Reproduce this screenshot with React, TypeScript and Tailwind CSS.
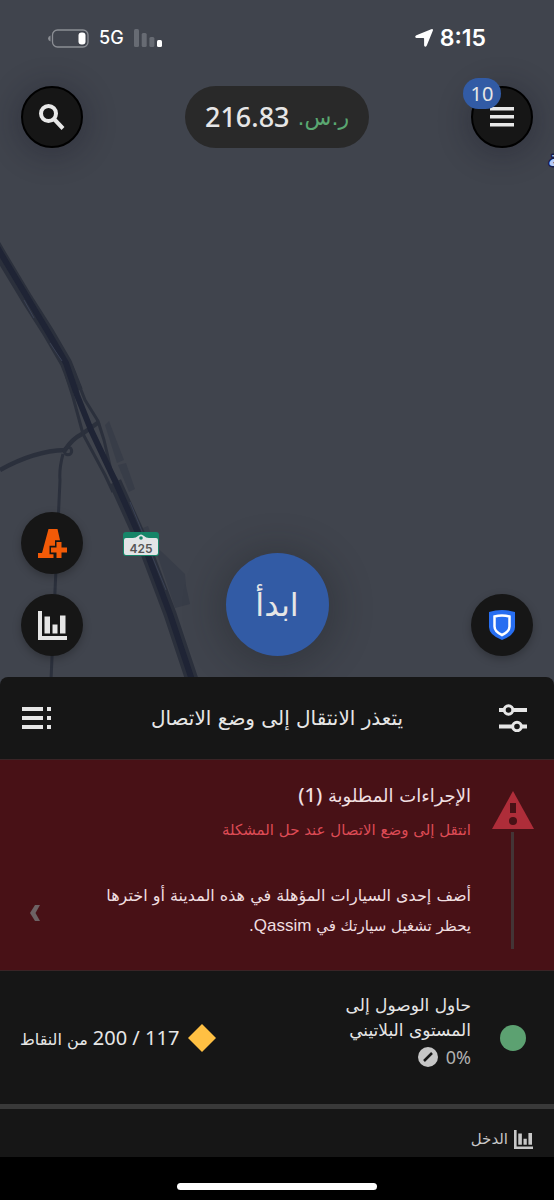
import type { ReactNode } from "react";

const round =
  "flex size-[62px] shrink-0 items-center justify-center rounded-full bg-[#161616]";

function BarChart({ className }: { className: string }) {
  return (
    <svg viewBox="0 0 29 29" className={className} fill="currentColor" aria-hidden="true">
      <path d="M0 0h4v25h25v4H0zM6.500 5.500h5.500v17H6.500zM14.500 13.500h5v9h-5zM22 4.500h5.500v18H22z" />
    </svg>
  );
}

function SearchIcon() {
  return (
    <svg viewBox="0 0 26 26" className="size-[26px]" fill="none" stroke="#e8e8e8" aria-hidden="true">
      <circle cx="9.500" cy="9.500" r="7.500" strokeWidth="4" />
      <path d="M15 15l9 9.500" strokeWidth="4" />
    </svg>
  );
}

function ConeIcon() {
  return (
    <svg viewBox="0 0 29 29" className="size-[29px]" fill="#f25a07" aria-hidden="true">
      <path d="M10.500 0h9l2.500 11.300h-5v5.500h-5.500v8.500h4V29H0v-5h4z" />
      <path d="M18.500 13h5v5.500H29v5h-5.500V29h-5v-5.500H13v-5h5.500z" />
    </svg>
  );
}

function ShieldIcon() {
  return (
    <svg viewBox="0 0 26 30" className="h-[30px] w-[26px]" aria-hidden="true">
      <path d="M0 2Q13-2 26 2v15q0 8-13 13Q0 25 0 17z" fill="#276ef1" />
      <path
        d="M5.500 6.500q7.500-2 15 0v10q0 5-7.500 8.500Q5.500 21.500 5.500 16.500z"
        fill="none"
        stroke="#fff"
        strokeWidth="2.500"
      />
    </svg>
  );
}

function Sliders() {
  return (
    <svg viewBox="0 0 28 28" className="size-7" fill="none" stroke="#e6e6e6" aria-hidden="true">
      <path d="M0 6h5M14 6h14M0 22.500h13M23 22.500h5" strokeWidth="4" />
      <circle cx="9.500" cy="6" r="4.300" strokeWidth="3" />
      <circle cx="18" cy="22.500" r="4.300" strokeWidth="3" />
    </svg>
  );
}

function ListIcon() {
  return (
    <svg viewBox="0 0 29 23" className="h-[23px] w-[29px]" fill="#e6e6e6" aria-hidden="true">
      <path d="M0 0h21v4H0zM0 9h21v4H0zM0 18h21v4H0zM25 0h4v4h-4zM25 9h4v4h-4zM25 18h4v4h-4z" />
    </svg>
  );
}

function StatusBar() {
  return (
    <div dir="ltr" className="flex h-[76px] items-center justify-between pr-[68px] pl-12 font-['Inter',sans-serif] text-white">
      <div className="flex items-center gap-[10px]">
        <svg viewBox="0 0 41 19" className="h-[19px] w-[41px]" aria-hidden="true">
          <path d="M2.500 6.500v6Q0 11.500 0 9.500t2.500-3z" fill="#8b8e94" />
          <rect x="4.500" y="1" width="35.500" height="17" rx="5" fill="none" stroke="#8b8e94" strokeWidth="1.300" />
          <rect x="30.500" y="3.500" width="7" height="12" rx="3" fill="#fff" />
        </svg>
        <span className="text-lg font-medium">5G</span>
        <svg viewBox="0 0 29 18" className="h-[18px] w-[29px]" fill="#676b73" aria-hidden="true">
          <rect width="5" height="18" rx="1.500" />
          <rect x="7.700" y="4" width="5" height="14" rx="1.500" />
          <rect x="15.400" y="8" width="5" height="10" rx="1.500" />
          <rect x="23" y="11" width="5" height="7" rx="1.500" fill="#fff" />
        </svg>
      </div>
      <div className="flex items-center gap-[7px]">
        <svg viewBox="0 0 18 18" className="size-[18px]" fill="#fff" aria-hidden="true">
          <path d="M16.200.2Q18.500-.5 17.800 1.800L11.800 16.600q-1.600 2.400-2.700-.1V9.600q0-.7-.7-.7H1.400Q-1 7.700 1.400 6.200z" />
        </svg>
        <span className="text-[23px] font-semibold">8:15</span>
      </div>
    </div>
  );
}

function MapBackground() {
  return (
    <svg
      viewBox="0 0 554 677"
      preserveAspectRatio="xMidYMax slice"
      className="absolute inset-0 size-full"
      fill="none"
      strokeLinejoin="round"
      aria-hidden="true"
    >
      <rect width="554" height="677" fill="#40444d" />
      <g fill="#383d48">
        <path d="M105 425l4-4 15 39-7 3zM118 465l8-2 9 26-6 3zM143 528l5-2 3 8-5 2z" />
        <path d="M154 545l8 7 23 22 1 12 4 18-15 4z" />
      </g>
      <g stroke="#2b303c">
        <path d="M0 470q34-19 65-20 7-11 17-16l17-12" strokeWidth="4.500" />
        <path d="M63 454q-4 15-3 26l-9 200" strokeWidth="3" />
        <circle cx="68" cy="451" r="3.700" strokeWidth="3" />
        <path d="M-8 240L0 254 27 299 48 332 66 363 77 391" strokeWidth="12" />
        <path d="M72 367L85 400 98 421 104 440 111 470 125 495" strokeWidth="3" />
        <path d="M66 375L73 397 83 434 105 475 113 492" strokeWidth="3" />
        <path d="M115 482L147 553 170 614 192 680" strokeWidth="13" />
      </g>
      <path
        d="M-8 238L0 252 27 297 48 332 66 363 77 395 91 430 116 483 147 553 170 614 192 680"
        stroke="#1f2435"
        strokeWidth="6"
      />
      <path d="M24 300L34 318M50 343L62 361M130 502L150 551 166 590" stroke="#3a4155" strokeWidth="1" />
      <rect x="123" y="532" width="36" height="24" rx="3" fill="#168568" />
      <path d="M126 538h7q3 0 5-2 3-3 6 0 2 2 5 2h7q2 0 2 2v13q0 2-2 2h-30q-2 0-2-2v-13q0-2 2-2z" fill="#e2e4e6" />
      <circle cx="141" cy="538" r="1.800" fill="#168568" />
      <text
        x="141"
        y="553"
        textAnchor="middle"
        className="fill-[#555] font-['Inter',sans-serif] text-[12px] font-semibold"
      >
        425
      </text>
      <text
        x="548"
        y="166"
        direction="ltr"
        stroke="#171d49"
        strokeWidth="3"
        paintOrder="stroke"
        className="fill-[#b9cbf5] font-['DejaVu_Sans',sans-serif] text-[22px] font-bold"
      >
        ـة
      </text>
    </svg>
  );
}

function IconButton({ label, look, children }: { label: string; look: string; children: ReactNode }) {
  return (
    <button type="button" aria-label={label} className={`${round} ${look}`}>
      {children}
    </button>
  );
}

const topStyle = "border-[2px] border-black shadow-[0_4px_28px_6px_rgba(20,22,35,0.28)]";
const lowStyle = "shadow-[0_3px_8px_rgba(0,0,0,0.25)]";

export default function App() {
  return (
    <div
      dir="rtl"
      lang="ar"
      className="flex min-h-screen flex-col bg-[#40444d] font-['DejaVu_Sans',sans-serif] text-[#e6e6e6]"
    >
      <section className="relative flex flex-1 flex-col">
        <MapBackground />
        <div className="relative flex flex-1 flex-col">
          <StatusBar />
          <div className="flex items-center justify-between px-[21px] pt-[10px]">
            <div className="relative">
              <IconButton label="القائمة" look={topStyle}>
                <svg viewBox="0 0 24 20" className="h-5 w-6" fill="#e8e8e8" aria-hidden="true">
                  <path d="M0 0h24v3.500H0zM0 8h24v3.500H0zM0 16h24v3.500H0z" />
                </svg>
              </IconButton>
              <span className="absolute -top-2 -left-2 flex h-[31px] w-[38px] items-center justify-center rounded-full bg-[#325ba5] font-['Noto_Sans',sans-serif] text-xl">
                10
              </span>
            </div>
            <div className="flex h-[62px] items-center gap-2 rounded-full bg-[#292929] px-5">
              <span className="text-[22px] text-[#5aa771]">ر.س.</span>
              <span className="font-['Noto_Sans',sans-serif] text-[27px] font-medium">216.83</span>
            </div>
            <IconButton label="بحث" look={topStyle}>
              <SearchIcon />
            </IconButton>
          </div>
          <div className="mt-auto flex items-end justify-between px-[21px] pb-[21px]">
            <IconButton label="الأمان" look={lowStyle}>
              <ShieldIcon />
            </IconButton>
            <button
              type="button"
              className="size-[103px] rounded-full bg-[#325ba5] text-[32px] shadow-[0_4px_36px_8px_rgba(20,25,30,0.28)]"
            >
              ابدأ
            </button>
            <div className="flex flex-col gap-5">
              <IconButton label="إضافة بلاغ" look={lowStyle}>
                <ConeIcon />
              </IconButton>
              <IconButton label="الإحصاءات" look={lowStyle}>
                <BarChart className="size-[29px]" />
              </IconButton>
            </div>
          </div>
        </div>
      </section>

      <main className="relative rounded-t-lg bg-[#161616]">
        <header className="flex h-[82px] items-center justify-between px-5">
          <button type="button" aria-label="التفضيلات" className="flex w-[43px] justify-center">
            <Sliders />
          </button>
          <h1 className="text-xl">يتعذر الانتقال إلى وضع الاتصال</h1>
          <button type="button" aria-label="القائمة التفصيلية" className="flex w-[43px] justify-end pl-[2px]">
            <ListIcon />
          </button>
        </header>

        <section className="flex h-[212px] gap-5 border-y border-[#3a2426] bg-[#481116] px-5 text-[#f0dfe0]">
          <div className="flex w-[43px] shrink-0 flex-col items-center gap-[3px] pt-[31px] pb-[21px]">
            <svg viewBox="0 0 42 38" className="h-[38px] w-[42px] shrink-0" aria-hidden="true">
              <path d="M21 0l21 38H0z" fill="#ae2d39" />
              <path d="M18 12h6v10h-6z" fill="#481116" />
              <circle cx="21" cy="30" r="4" fill="#481116" />
            </svg>
            <div className="w-[3px] flex-1 bg-[#433536]" />
          </div>
          <div className="flex-1 pt-5">
            <h2 className="text-lg leading-8">
              الإجراءات المطلوبة <span className="font-['Noto_Sans',sans-serif] text-xl font-medium">(1)</span>
            </h2>
            <p className="text-[15px] leading-9 text-[#dd4b55]">انتقل إلى وضع الاتصال عند حل المشكلة</p>
            <a href="#vehicle" className="relative mt-8 block">
              <span className="block text-base leading-8">أضف إحدى السيارات المؤهلة في هذه المدينة أو اخترها</span>
              <span className="block text-[15px] leading-7">
                يحظر تشغيل سيارتك في <span className="font-['Liberation_Sans',sans-serif] text-[17px]">Qassim</span>.
              </span>
              <svg viewBox="0 0 10 16" className="absolute top-[25px] left-[10px] h-4 w-[10px]" fill="#6d6264" aria-hidden="true">
                <path d="M5 0h5L5.500 8l4.500 8H5L0 8z" />
              </svg>
            </a>
          </div>
        </section>

        <section className="flex h-[133px] items-center justify-between px-5">
          <div className="flex items-center">
            <div className="ml-5 flex w-[43px] justify-center">
              <div className="size-[26px] rounded-full bg-[#5ca171]" />
            </div>
            <div className="w-[132px] pb-3">
              <p className="text-[17px] leading-[25px]">حاول الوصول إلى المستوى البلاتيني</p>
              <p className="flex items-center gap-2 font-['Noto_Sans',sans-serif] text-lg leading-7 text-[#b0b0b0]">
                0%
                <svg viewBox="0 0 20 20" className="size-5" aria-hidden="true">
                  <circle cx="10" cy="10" r="10" fill="#c6c6c6" />
                  <path d="M6 14l8-8" stroke="#161616" strokeWidth="2.500" />
                </svg>
              </p>
            </div>
          </div>
          <div className="flex items-center gap-[9px]">
            <svg viewBox="0 0 28 28" className="size-7" aria-hidden="true">
              <path d="M14 0l14 14-14 14L0 14z" fill="#ffc043" />
            </svg>
            <p className="text-base">
              <span className="font-['Noto_Sans',sans-serif] text-xl">117 / 200</span> من النقاط
            </p>
          </div>
        </section>

        <section className="flex h-[53px] items-center gap-[6px] border-t-[5px] border-[#393939] px-[21px] pt-3 text-[#c8c8c8]">
          <BarChart className="size-[19px]" />
          <h2 className="text-[15px]">الدخل</h2>
        </section>
      </main>

      <footer className="flex h-[43px] justify-center bg-black pt-[26px]">
        <div className="h-[7px] w-[36%] rounded-full bg-white" />
      </footer>
    </div>
  );
}
